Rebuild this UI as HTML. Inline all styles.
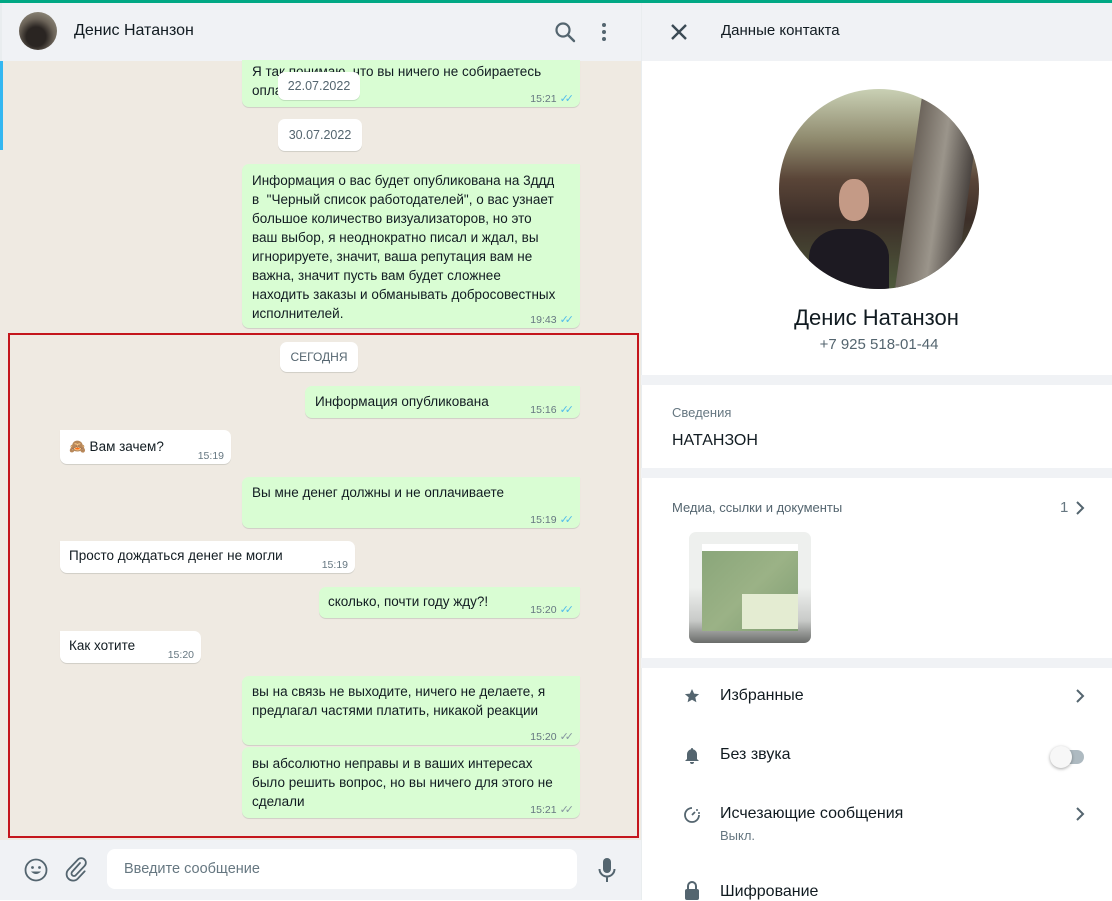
<!DOCTYPE html>
<html><head><meta charset="utf-8">
<style>
*{margin:0;padding:0;box-sizing:border-box}
body{width:1112px;height:900px;overflow:hidden;position:relative;background:#fff;font-family:"Liberation Sans","DejaVu Sans",sans-serif;color:#111b21}
.a{position:absolute}
.b{position:absolute;border-radius:7px;box-shadow:0 1px 0.5px rgba(11,20,26,.13);font-size:13.5px;line-height:19px;white-space:nowrap}
.o{background:#d9fdd3}
.i{background:#fff}
.t{position:absolute;font-size:10.5px;color:#667781;right:10px;white-space:nowrap}
.ck{color:#53bdeb;margin-left:3px;font-size:11px;letter-spacing:-4px}
.ckg{color:#8696a0}
.d{position:absolute;background:#fff;border-radius:7px;font-size:12.5px;color:#54656f;text-align:center;box-shadow:0 1px 0.5px rgba(11,20,26,.13)}
.sep{position:absolute;left:641px;width:471px;height:10px;background:#f0f2f5}
</style></head><body>
<div class="a" style="left:0;top:0;width:1112px;height:3px;background:#00a884"></div>
<div class="a" style="left:0;top:3px;width:641px;height:897px;background:#efeae2"></div>
<div class="a" style="left:0;top:60px;width:3px;height:90px;background:#34b7f1"></div>
<div class="a" style="left:0;top:3px;width:641px;height:58px;background:#f0f2f5;border-left:2px solid #e9edef"></div>
<div class="a" style="left:19px;top:12px;width:38px;height:38px;border-radius:50%;background:radial-gradient(circle at 45% 65%,#2a2522 0 30%,#6b6358 55%,#a9a594 100%)"></div>
<div class="a" style="left:74px;top:22px;font-size:16px;color:#111b21">Денис Натанзон</div>
<svg class="a" style="left:554px;top:21px" width="22" height="22" viewBox="0 0 22 22"><circle cx="9" cy="9" r="6.5" fill="none" stroke="#54656f" stroke-width="2.2"/><path d="M14 14l6 6" stroke="#54656f" stroke-width="2.4" stroke-linecap="round"/></svg>
<svg class="a" style="left:600px;top:22px" width="8" height="20"><circle cx="4" cy="3" r="2" fill="#54656f"/><circle cx="4" cy="10" r="2" fill="#54656f"/><circle cx="4" cy="17" r="2" fill="#54656f"/></svg>

<div class="b o" style="left:242px;top:60px;width:338px;height:47px;border-radius:0 0 7px 7px"><div class="a" style="left:10px;top:2px">Я так понимаю, что вы ничего не собираетесь<br>опла</div><div class="t" style="top:30px">15:21<span class="ck">✓✓</span></div></div>
<div class="d" style="left:278px;top:72px;width:82px;height:28px;line-height:28px">22.07.2022</div>
<div class="d" style="left:278px;top:119px;width:84px;height:32px;line-height:32px">30.07.2022</div>
<div class="b o" style="left:242px;top:164px;width:338px;height:164px;border-top-right-radius:0"><div class="a" style="left:10px;top:7px">Информация о вас будет опубликована на 3ддд<br>в&nbsp; "Черный список работодателей", о вас узнает<br>большое количество визуализаторов, но это<br>ваш выбор, я неоднократно писал и ждал, вы<br>игнорируете, значит, ваша репутация вам не<br>важна, значит пусть вам будет сложнее<br>находить заказы и обманывать добросовестных<br>исполнителей.</div><div class="t" style="top:147px">19:43<span class="ck">✓✓</span></div></div>

<div class="a" style="left:8px;top:333px;width:631px;height:505px;border:2px solid #c4161c"></div>
<div class="d" style="left:280px;top:342px;width:78px;height:30px;line-height:30px;font-size:12px">СЕГОДНЯ</div>
<div class="b o" style="left:305px;top:386px;width:275px;height:32px;border-top-right-radius:0"><div class="a" style="left:10px;top:6px">Информация опубликована</div><div class="t" style="top:15px">15:16<span class="ck">✓✓</span></div></div>
<div class="b i" style="left:60px;top:430px;width:171px;height:34px;border-top-left-radius:0"><div class="a" style="left:9px;top:7px">🙈 Вам зачем?</div><div class="t" style="top:17px;right:7px">15:19</div></div>
<div class="b o" style="left:242px;top:477px;width:338px;height:51px;border-top-right-radius:0"><div class="a" style="left:10px;top:6px">Вы мне денег должны и не оплачиваете</div><div class="t" style="top:34px">15:19<span class="ck">✓✓</span></div></div>
<div class="b i" style="left:60px;top:541px;width:295px;height:32px;border-top-left-radius:0"><div class="a" style="left:9px;top:5px">Просто дождаться денег не могли</div><div class="t" style="top:15px;right:7px">15:19</div></div>
<div class="b o" style="left:319px;top:587px;width:261px;height:31px;border-top-right-radius:0"><div class="a" style="left:9px;top:5px">сколько, почти году жду?!</div><div class="t" style="top:14px">15:20<span class="ck">✓✓</span></div></div>
<div class="b i" style="left:60px;top:631px;width:141px;height:32px;border-top-left-radius:0"><div class="a" style="left:9px;top:5px">Как хотите</div><div class="t" style="top:15px;right:7px">15:20</div></div>
<div class="b o" style="left:242px;top:676px;width:338px;height:69px;border-top-right-radius:0"><div class="a" style="left:10px;top:6px">вы на связь не выходите, ничего не делаете, я<br>предлагал частями платить, никакой реакции</div><div class="t" style="top:52px">15:20<span class="ck ckg">✓✓</span></div></div>
<div class="b o" style="left:242px;top:747px;width:338px;height:71px"><div class="a" style="left:10px;top:7px">вы абсолютно неправы и в ваших интересах<br>было решить вопрос, но вы ничего для этого не<br>сделали</div><div class="t" style="top:54px">15:21<span class="ck ckg">✓✓</span></div></div>

<div class="a" style="left:0;top:840px;width:641px;height:60px;background:#f0f2f5"></div>
<svg class="a" style="left:24px;top:858px" width="24" height="24" viewBox="0 0 24 24"><circle cx="12" cy="12" r="10.5" fill="none" stroke="#54656f" stroke-width="1.8"/><circle cx="8.5" cy="9.5" r="1.4" fill="#54656f"/><circle cx="15.5" cy="9.5" r="1.4" fill="#54656f"/><path d="M7 13.5q5 5 10 0z" fill="#54656f"/></svg>
<svg class="a" style="left:64px;top:857px" width="24" height="26" viewBox="0 0 24 26"><path d="M16 6l-8 9a2.5 2.5 0 0 0 3.5 3.5l9-9.5a4.5 4.5 0 0 0-6.5-6.5l-9.5 10a6.5 6.5 0 0 0 9.2 9.2l7-7.4" fill="none" stroke="#54656f" stroke-width="1.8" stroke-linecap="round"/></svg>
<div class="a" style="left:107px;top:849px;width:470px;height:40px;background:#fff;border-radius:8px"></div>
<div class="a" style="left:124px;top:861px;font-size:14.5px;color:#667781">Введите сообщение</div>
<svg class="a" style="left:597px;top:857px" width="20" height="26" viewBox="0 0 20 26"><rect x="6" y="1" width="8" height="15" rx="4" fill="#54656f"/><path d="M2.5 12a7.5 7.5 0 0 0 15 0M10 19.5V25" stroke="#54656f" stroke-width="2" fill="none"/></svg>

<div class="a" style="left:641px;top:3px;width:1px;height:897px;background:#e9edef"></div>
<div class="a" style="left:642px;top:3px;width:470px;height:58px;background:#f0f2f5"></div>
<svg class="a" style="left:670px;top:23px" width="18" height="18" viewBox="0 0 18 18"><path d="M2 2l14 14M16 2L2 16" stroke="#3b4a54" stroke-width="2.4"/></svg>
<div class="a" style="left:721px;top:22px;font-size:15px;color:#111b21">Данные контакта</div>
<div class="a" style="left:779px;top:89px;width:200px;height:200px;border-radius:50%;overflow:hidden;background:linear-gradient(180deg,#c9d0b4 0%,#8f8a6e 25%,#5a4538 45%,#3c2e28 65%,#4e5a3c 100%)">
 <div class="a" style="left:130px;top:0;width:60px;height:200px;background:linear-gradient(90deg,#6d655c,#9b958b,#4a4440);transform:skewX(-8deg)"></div>
 <div class="a" style="left:30px;top:140px;width:80px;height:70px;border-radius:40% 40% 0 0;background:#1d1a22"></div>
 <div class="a" style="left:60px;top:90px;width:30px;height:42px;border-radius:45%;background:#c49a86"></div>
</div>
<div class="a" style="left:641px;top:305px;width:471px;text-align:center;font-size:22px;color:#111b21">Денис Натанзон</div>
<div class="a" style="left:641px;top:336px;width:476px;text-align:center;font-size:15px;color:#54656f">+7 925 518-01-44</div>
<div class="sep" style="top:375px"></div>
<div class="a" style="left:672px;top:405px;font-size:13px;color:#667781">Сведения</div>
<div class="a" style="left:672px;top:432px;font-size:16px;color:#111b21">НАТАНЗОН</div>
<div class="sep" style="top:468px"></div>
<div class="a" style="left:672px;top:500px;font-size:13px;color:#54656f">Медиа, ссылки и документы</div>
<div class="a" style="left:1060px;top:499px;font-size:15px;color:#667781">1</div>
<svg class="a" style="left:1074px;top:500px" width="12" height="16"><path d="M3 2l6 6-6 6" stroke="#54656f" stroke-width="2" fill="none"/></svg>
<div class="a" style="left:689px;top:532px;width:122px;height:111px;border-radius:7px;background:linear-gradient(180deg,#eef0ee 0%,#eef0ee 50%,#c8cac8 80%,#6a6c6a 100%)"></div>
<div class="a" style="left:702px;top:544px;width:96px;height:10px;background:#fff"></div>
<div class="a" style="left:702px;top:551px;width:96px;height:80px;background:linear-gradient(135deg,#8aa67a,#9bb286 50%,#7e9c72)"></div>
<div class="a" style="left:742px;top:594px;width:56px;height:35px;background:#e4ecd2"></div>
<div class="sep" style="top:658px"></div>
<svg class="a" style="left:684px;top:688px" width="16" height="16" viewBox="0 0 16 16"><path d="M8 1l2.1 4.6 5 .5-3.8 3.3 1.1 4.9L8 11.8 3.6 14.3l1.1-4.9L.9 6.1l5-.5z" fill="#54656f"/></svg>
<div class="a" style="left:720px;top:687px;font-size:16px">Избранные</div>
<svg class="a" style="left:1074px;top:688px" width="12" height="16"><path d="M3 2l6 6-6 6" stroke="#54656f" stroke-width="2" fill="none"/></svg>
<svg class="a" style="left:684px;top:747px" width="16" height="18" viewBox="0 0 16 18"><path d="M8 1a1 1 0 0 1 1 1.3A5 5 0 0 1 13 7v5l2 2H1l2-2V7a5 5 0 0 1 4-4.7A1 1 0 0 1 8 1zM6 15h4a2 2 0 0 1-4 0z" fill="#54656f"/></svg>
<div class="a" style="left:720px;top:746px;font-size:16px">Без звука</div>
<div class="a" style="left:1054px;top:750px;width:30px;height:14px;border-radius:7px;background:#aebac1"></div>
<div class="a" style="left:1050px;top:746px;width:22px;height:22px;border-radius:50%;background:#f7f7f7;box-shadow:0 1px 3px rgba(0,0,0,.35)"></div>
<svg class="a" style="left:683px;top:806px" width="18" height="18" viewBox="0 0 18 18"><path d="M9 2a7 7 0 1 0 7 7" stroke="#54656f" stroke-width="1.8" fill="none"/><path d="M9 9l3-3" stroke="#54656f" stroke-width="1.8"/><circle cx="14" cy="4" r="1" fill="#54656f"/><circle cx="16" cy="7" r="1" fill="#54656f"/></svg>
<div class="a" style="left:720px;top:805px;font-size:16px">Исчезающие сообщения</div>
<div class="a" style="left:720px;top:828px;font-size:13px;color:#667781">Выкл.</div>
<svg class="a" style="left:1074px;top:806px" width="12" height="16"><path d="M3 2l6 6-6 6" stroke="#54656f" stroke-width="2" fill="none"/></svg>
<svg class="a" style="left:684px;top:881px" width="16" height="19" viewBox="0 0 16 19"><rect x="1" y="8" width="14" height="11" rx="2" fill="#54656f"/><path d="M4 8V5a4 4 0 0 1 8 0v3" stroke="#54656f" stroke-width="2" fill="none"/></svg>
<div class="a" style="left:720px;top:883px;font-size:16px">Шифрование</div>
</body></html>
